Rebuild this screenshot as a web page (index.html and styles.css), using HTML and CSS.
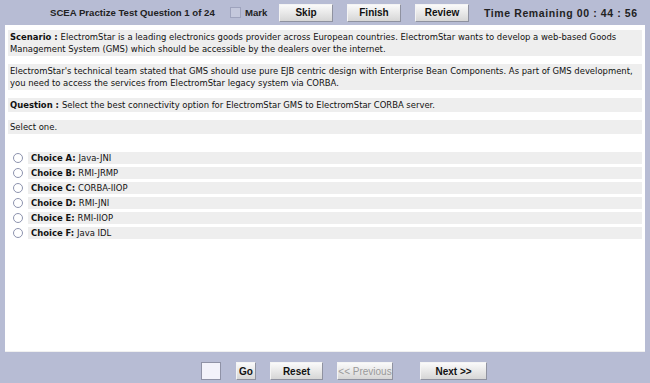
FILE: index.html
```html
<!DOCTYPE html>
<html lang="en">
<head>
  <meta charset="UTF-8" />
  <title>SCEA Practize Test</title>
  <link rel="stylesheet" href="styles.css">
</head>
<body>
  <header class="topbar">
    <span class="title">SCEA Practize Test Question 1 of 24</span>
    <label class="mark"><span class="box"></span>Mark</label>
    <button class="btn">Skip</button>
    <button class="btn">Finish</button>
    <button class="btn">Review</button>
    <span class="timer">Time Remaining 00 : 44 : 56</span>
  </header>

  <main class="content">
    <p class="row"><b>Scenario : </b>ElectromStar is a leading electronics goods provider across European countries. ElectromStar wants to develop a web-based Goods Management System (GMS) which should be accessible by the dealers over the internet.</p>
    <p class="row">ElectromStar's technical team stated that GMS should use pure EJB centric design with Enterprise Bean Components. As part of GMS development, you need to access the services from ElectromStar legacy system via CORBA.</p>
    <p class="row"><b>Question : </b>Select the best connectivity option for ElectromStar GMS to ElectromStar CORBA server.</p>
    <p class="row">Select one.</p>

    <ul class="choices">
      <li><span class="radio"></span><span class="row"><b>Choice A: </b>Java-JNI</span></li>
      <li><span class="radio"></span><span class="row"><b>Choice B: </b>RMI-JRMP</span></li>
      <li><span class="radio"></span><span class="row"><b>Choice C: </b>CORBA-IIOP</span></li>
      <li><span class="radio"></span><span class="row"><b>Choice D: </b>RMI-JNI</span></li>
      <li><span class="radio"></span><span class="row"><b>Choice E: </b>RMI-IIOP</span></li>
      <li><span class="radio"></span><span class="row"><b>Choice F: </b>Java IDL</span></li>
    </ul>
  </main>

  <footer class="bottombar">
    <span class="jump"></span>
    <button class="btn go">Go</button>
    <button class="btn reset">Reset</button>
    <button class="btn disabled">&lt;&lt; Previous</button>
    <button class="btn wide">Next &gt;&gt;</button>
  </footer>
</body>
</html>
```

FILE: styles.css
```css
body {
  margin: 0;
  background: #b7bcd4;
  font-family: "DejaVu Sans Condensed", "DejaVu Sans", sans-serif;
  font-size: 9.4px;
  color: #111;
  height: 383px;
  display: flex;
  flex-direction: column;
  overflow: hidden;
}

.topbar {
  height: 25px;
  flex: none;
  display: flex;
  align-items: center;
  padding-left: 50px;
  font-family: "Liberation Sans", Arial, sans-serif;
  font-size: 9.6px;
  font-weight: bold;
  color: #222;
  white-space: nowrap;
}

.title {
  width: 163px;
  margin-right: 17px;
}

.mark {
  width: 32px;
  display: flex;
  align-items: center;
  margin-right: 17px;
}

.mark .box {
  flex: none;
  width: 9px;
  height: 9px;
  background: #c4c8dc;
  border: 1px solid #9ea3bd;
  margin-right: 4px;
}

.btn {
  flex: none;
  font-family: "Liberation Sans", Arial, sans-serif;
  font-size: 10px;
  font-weight: bold;
  color: #111;
  width: 54px;
  height: 18px;
  padding: 0;
  margin-right: 14px;
  white-space: nowrap;
  border: 1px solid #8f92a0;
  border-top-color: #f4f4f4;
  border-left-color: #f4f4f4;
  background: linear-gradient(#fafafa, #d6d6d6);
}

.timer {
  margin-left: 1px;
  font-size: 10.5px;
  letter-spacing: 0.6px;
}

.content {
  height: 327px;
  flex: none;
  background: #fff;
  margin: 0 5px;
  padding: 5px 3px 0;
  box-sizing: border-box;
  border-bottom: 1px solid #f0f0f0;
}

.row {
  display: block;
  background: #eeeeee;
  margin: 0 0 8px;
  line-height: 12px;
  padding: 1px 2px;
}

.choices {
  list-style: none;
  margin: 18px 0 0;
  padding: 0;
}

.choices li {
  display: flex;
  align-items: center;
  margin-bottom: 3px;
}

.choices .row {
  flex: 1;
  margin: 0;
  padding: 0 3px;
}

.radio {
  width: 8px;
  height: 8px;
  border: 1px solid #8d93ae;
  border-radius: 50%;
  background: #fff;
  margin: 0 5px 0 5px;
}

.bottombar {
  flex: 1;
  display: flex;
  align-items: flex-end;
  padding: 0 0 3px 201px;
}

.jump {
  flex: none;
  width: 18px;
  height: 16px;
  background: #f2f2fa;
  border: 1px solid #8f92a6;
  margin-right: 15px;
}

.btn.go {
  width: 20px;
}

.btn.reset {
  width: 53px;
}

.btn.disabled {
  color: #9a9a9a;
  font-weight: normal;
  width: 56px;
  margin-right: 27px;
}

.btn.wide {
  width: 67px;
}
```
